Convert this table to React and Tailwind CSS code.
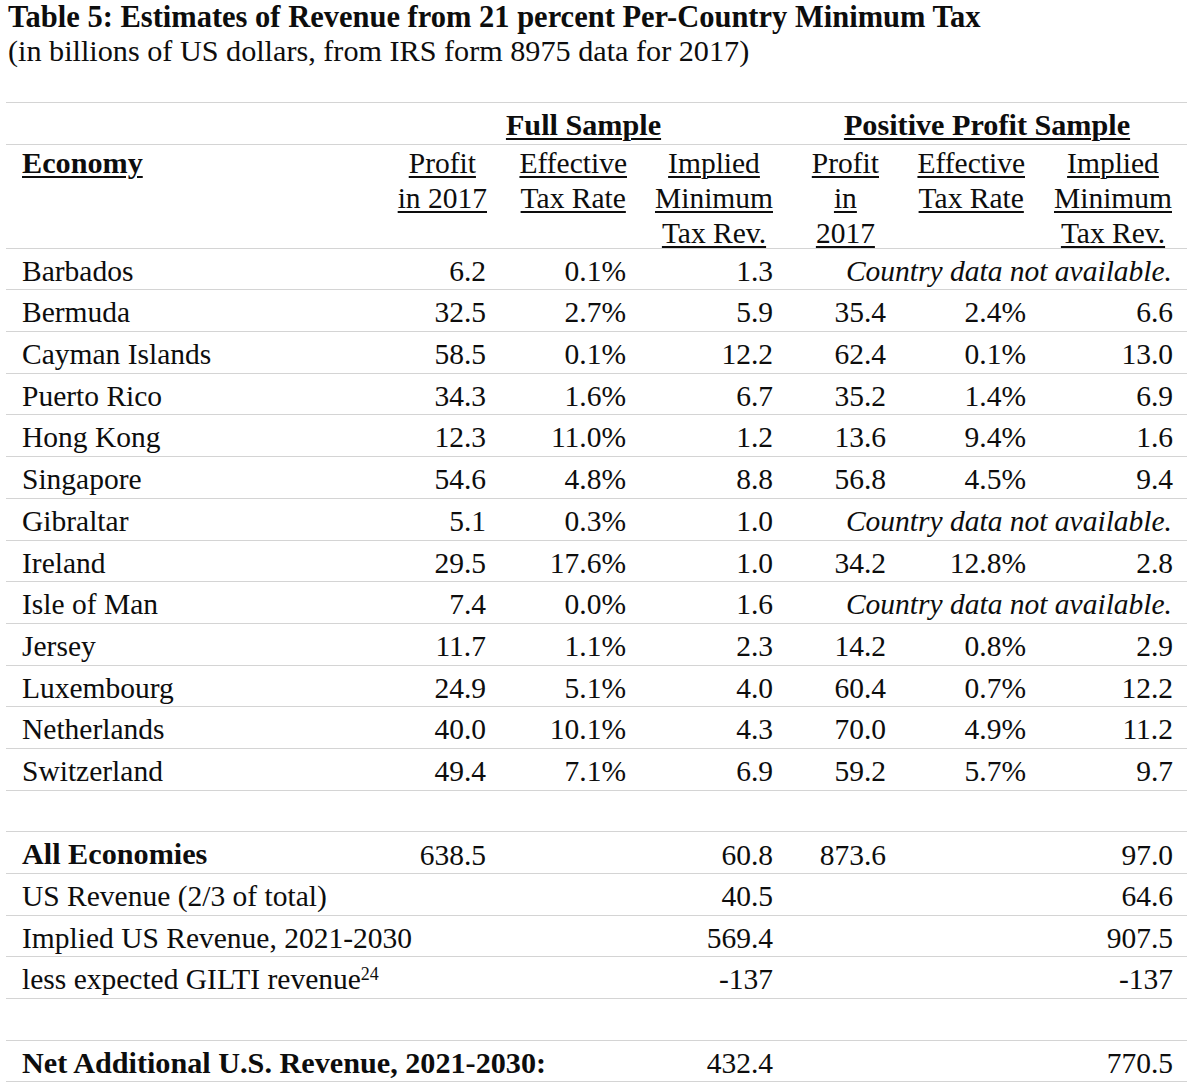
const COLS = 'grid grid-cols-[374px_120px_140px_147px_113px_140px_147px]'
const ROW = `${COLS} h-[41.7px] items-center border-b-[1.5px] border-[#d4d4d4]`
const U = 'underline decoration-[1.5px] underline-offset-[3px]'
const B = 'font-bold text-[30.2px]'

const countries = [
  ['Barbados', '6.2', '0.1%', '1.3', null],
  ['Bermuda', '32.5', '2.7%', '5.9', ['35.4', '2.4%', '6.6']],
  ['Cayman Islands', '58.5', '0.1%', '12.2', ['62.4', '0.1%', '13.0']],
  ['Puerto Rico', '34.3', '1.6%', '6.7', ['35.2', '1.4%', '6.9']],
  ['Hong Kong', '12.3', '11.0%', '1.2', ['13.6', '9.4%', '1.6']],
  ['Singapore', '54.6', '4.8%', '8.8', ['56.8', '4.5%', '9.4']],
  ['Gibraltar', '5.1', '0.3%', '1.0', null],
  ['Ireland', '29.5', '17.6%', '1.0', ['34.2', '12.8%', '2.8']],
  ['Isle of Man', '7.4', '0.0%', '1.6', null],
  ['Jersey', '11.7', '1.1%', '2.3', ['14.2', '0.8%', '2.9']],
  ['Luxembourg', '24.9', '5.1%', '4.0', ['60.4', '0.7%', '12.2']],
  ['Netherlands', '40.0', '10.1%', '4.3', ['70.0', '4.9%', '11.2']],
  ['Switzerland', '49.4', '7.1%', '6.9', ['59.2', '5.7%', '9.7']],
]

function Num({ children }) {
  return <div className="pr-[14px] text-right">{children}</div>
}

function HeadCell({ lines, extra = '' }) {
  return (
    <div className={`text-right ${extra}`}>
      <div className="inline-block text-center">
        {lines.map((line) => (
          <div key={line} className={U}>
            <span>{line}</span>
          </div>
        ))}
      </div>
    </div>
  )
}

export default function App() {
  return (
    <main className="min-h-screen bg-white text-[#0d0d0d] font-['Liberation_Serif',serif] text-[29.5px]">
      <div className="h-[68px] pl-[8px] leading-[34px]">
        <p className="font-bold text-[30.5px]">Table 5: Estimates of Revenue from 21 percent Per-Country Minimum Tax</p>
        <p className="text-[30.2px]">(in billions of US dollars, from IRS form 8975 data for 2017)</p>
      </div>

      <section className="ml-[6px] mt-[34px] w-[1181px] border-t-[1.5px] border-[#d4d4d4]">
        <div className={ROW}>
          <div className={`col-start-2 col-span-3 text-center ${B} ${U}`}>Full Sample</div>
          <div className={`col-span-3 text-center ${B} ${U}`}>Positive Profit Sample</div>
        </div>

        <div className={`${COLS} h-[104px] items-start border-b-[1.5px] border-[#d4d4d4] leading-[35px] pt-[1px]`}>
          <div className={`pl-[16px] ${B} ${U}`}>
            <span>Economy</span>
          </div>
          <HeadCell lines={['Profit', 'in 2017']} extra="pr-[13px]" />
          <HeadCell lines={['Effective', 'Tax Rate']} extra="pr-[13px]" />
          <HeadCell lines={['Implied', 'Minimum', 'Tax Rev.']} extra="pr-[14px]" />
          <HeadCell lines={['Profit', 'in', '2017']} extra="pr-[21px]" />
          <HeadCell lines={['Effective', 'Tax Rate']} extra="pr-[15px]" />
          <HeadCell lines={['Implied', 'Minimum', 'Tax Rev.']} extra="pr-[15px]" />
        </div>

        {countries.map(([name, p, r, t, pos]) => (
          <div key={name} className={ROW}>
            <div className="pl-[16px]">{name}</div>
            <Num>{p}</Num>
            <Num>{r}</Num>
            <Num>{t}</Num>
            {pos ? (
              <>
                <Num>{pos[0]}</Num>
                <Num>{pos[1]}</Num>
                <Num>{pos[2]}</Num>
              </>
            ) : (
              <div className="col-span-3 pr-[15px] text-right italic">Country data not available.</div>
            )}
          </div>
        ))}

        <div className={ROW} />

        <div className={ROW}>
          <div className={`pl-[16px] ${B}`}>All Economies</div>
          <Num>638.5</Num>
          <div />
          <Num>60.8</Num>
          <Num>873.6</Num>
          <div />
          <Num>97.0</Num>
        </div>
        <div className={ROW}>
          <div className="pl-[16px]">US Revenue (2/3 of total)</div>
          <div />
          <div />
          <Num>40.5</Num>
          <div />
          <div />
          <Num>64.6</Num>
        </div>
        <div className={ROW}>
          <div className="col-span-2 pl-[16px]">Implied US Revenue, 2021-2030</div>
          <div />
          <Num>569.4</Num>
          <div />
          <div />
          <Num>907.5</Num>
        </div>
        <div className={ROW}>
          <div className="col-span-2 pl-[16px]">
            less expected GILTI revenue<sup className="text-[18px]">24</sup>
          </div>
          <div />
          <Num>-137</Num>
          <div />
          <div />
          <Num>-137</Num>
        </div>

        <div className={ROW} />

        <div className={ROW}>
          <div className={`col-span-3 pl-[16px] whitespace-nowrap ${B}`}>Net Additional U.S. Revenue, 2021-2030:</div>
          <Num>432.4</Num>
          <div />
          <div />
          <Num>770.5</Num>
        </div>
      </section>
    </main>
  )
}
